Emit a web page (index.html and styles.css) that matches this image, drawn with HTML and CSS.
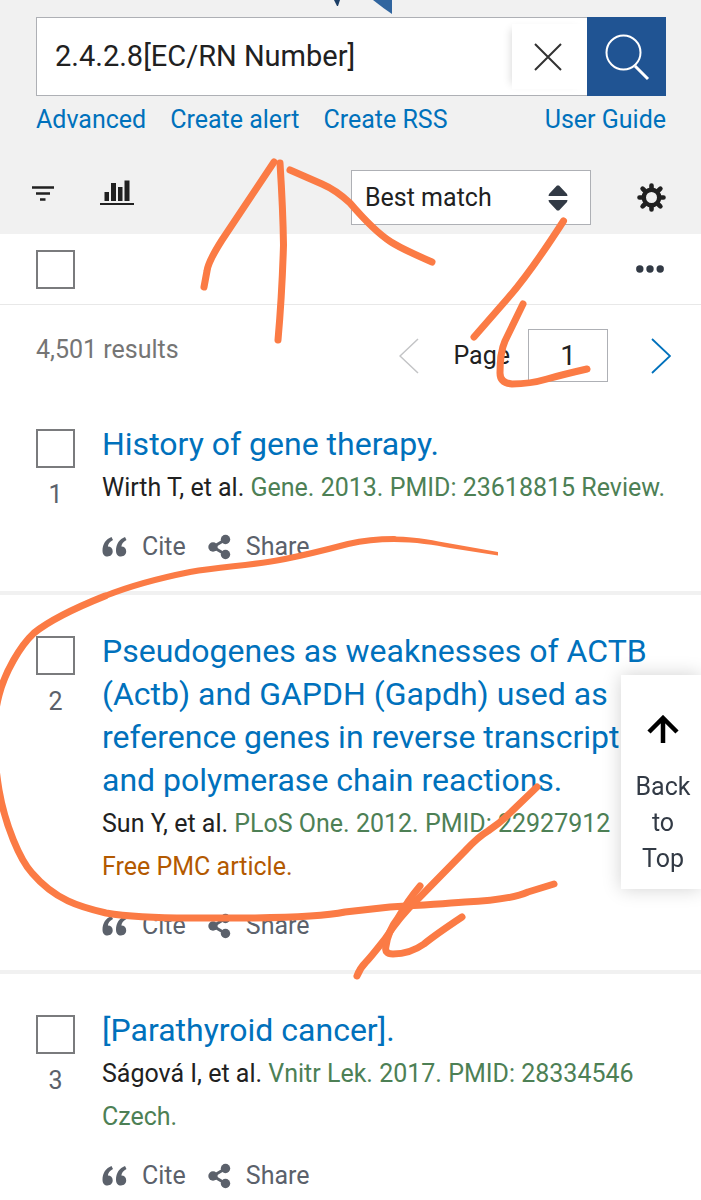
FILE: index.html
```html
<!DOCTYPE html>
<html lang="en">
<head>
    <meta charset="UTF-8">
    <meta name="viewport" content="width=device-width, initial-scale=1.0">
    <title>2.4.2.8[EC/RN Number] - Search Results</title>
    <link rel="stylesheet" href="styles.css">
</head>
<body>
    <!-- shared icons -->
    <svg class="defs" width="0" height="0" aria-hidden="true">
        <symbol id="quote" viewBox="0 0 26 22">
            <path d="M9.500 1C4 3 0.500 8 0.500 14.500C0.500 18.500 2.500 20.500 5.500 20.500C8.500 20.500 10.700 18.500 10.700 15.300C10.700 12.500 8.700 10.600 5.900 10.600C6.100 8 7.500 5.700 11 4Z"/>
            <path d="M23 1C17.500 3 14 8 14 14.500C14 18.500 16 20.500 19 20.500C22 20.500 24.200 18.500 24.200 15.300C24.200 12.500 22.200 10.600 19.400 10.600C19.600 8 21 5.700 24.500 4Z"/>
        </symbol>
        <symbol id="share" viewBox="0 0 24 26">
            <path d="M17.500 5.500L5 13L17.500 20.500" fill="none" stroke="currentColor" stroke-width="3"/>
            <circle cx="17.500" cy="5.500" r="4.700"/>
            <circle cx="5" cy="13" r="4.700"/>
            <circle cx="17.500" cy="20.500" r="4.700"/>
        </symbol>
    </svg>

    <header class="header">
        <svg class="logo" width="84" height="17" viewBox="-24 0 84 17" aria-hidden="true">
            <path d="M1 0H7L5 6H4Z" fill="#1c3e66"/>
            <path d="M40 0H59V14Q50 8 40 0Z" fill="#30659f"/>
        </svg>

        <form class="search">
            <input class="search-input" type="text" aria-label="Search term" value="2.4.2.8[EC/RN Number]">
            <button class="clear-btn" type="button" aria-label="Clear search">
                <svg width="28" height="28" viewBox="0 0 28 28"><path d="M1 1L27 27M27 1L1 27" stroke="#323232" stroke-width="2"/></svg>
            </button>
            <button class="search-btn" type="submit" aria-label="Search">
                <svg width="46" height="48" viewBox="0 0 46 48" fill="none" stroke="#fff">
                    <circle cx="19.500" cy="19.500" r="17" stroke-width="2"/>
                    <path d="M31 33L44 46" stroke-width="3"/>
                </svg>
            </button>
        </form>

        <nav class="links">
            <a href="#">Advanced</a>
            <a href="#">Create alert</a>
            <a href="#">Create RSS</a>
            <a href="#" class="guide">User Guide</a>
        </nav>

        <div class="toolbar">
            <button class="tool-btn" type="button" aria-label="Filters">
                <svg width="24" height="16" viewBox="0 0 24 16"><path d="M1 2.500H23M5 8.500H19M9 14.500H14.500" stroke="#212121" stroke-width="2.600"/></svg>
            </button>
            <button class="tool-btn" type="button" aria-label="Results by year">
                <svg width="34" height="26" viewBox="0 0 34 26" fill="#212121">
                    <path d="M4.500 12H9V21H4.500ZM11 3H16V21H11ZM18 7H22.500V21H18ZM24.500 0.500H29.500V21H24.500ZM0 23H34V25H0Z"/>
                </svg>
            </button>
            <div class="sort">
                <select class="sort-select" aria-label="Sort by">
                    <option>Best match</option>
                    <option>Most recent</option>
                </select>
                <svg class="sort-icon" width="20" height="26" viewBox="0 0 20 26" fill="#323a45" aria-hidden="true">
                    <path d="M0.500 11L1 9L9 0.500H11L19 9L19.500 11ZM0.500 15L1 17L9 25.500H11L19 17L19.500 15Z"/>
                </svg>
            </div>
            <button class="settings-btn" type="button" aria-label="Display options">
                <svg width="29" height="29" viewBox="-14.500 -14.500 29 29" fill="none" stroke="#212121">
                    <circle r="7.700" stroke-width="4.400"/>
                    <path d="M0 -9V-12M0 9V12M-9 0H-12M9 0H12M6.500 -6.500L8.900 -8.900M-6.500 -6.500L-8.900 -8.900M6.500 6.500L8.900 8.900M-6.500 6.500L-8.900 8.900" stroke-width="4.600" stroke-linecap="round"/>
                </svg>
            </button>
        </div>
    </header>

    <main>
        <div class="bulk">
            <input class="check" type="checkbox" aria-label="Select all results">
            <button class="more-btn" type="button" aria-label="More actions">
                <svg width="28" height="8" viewBox="0 0 28 8" fill="#323a45"><circle cx="3.800" cy="4" r="3.700"/><circle cx="14" cy="4" r="3.700"/><circle cx="24.200" cy="4" r="3.700"/></svg>
            </button>
        </div>

        <div class="results-bar">
            <p class="count">4,501 results</p>
            <div class="pager">
                <button class="prev" type="button" aria-label="Previous page" disabled>
                    <svg width="20" height="36" viewBox="0 0 20 36"><path d="M19 1L1 18L19 35" fill="none" stroke="#c3c4c6" stroke-width="1.500"/></svg>
                </button>
                <label for="page">Page</label>
                <input class="page-input" id="page" type="text" value="1">
                <button class="next" type="button" aria-label="Next page">
                    <svg width="20" height="36" viewBox="0 0 20 36"><path d="M1 1L19 18L1 35" fill="none" stroke="#0071bc" stroke-width="1.800"/></svg>
                </button>
            </div>
        </div>

        <article class="result">
            <div class="side">
                <input class="check" id="r1" type="checkbox">
                <label for="r1">1</label>
            </div>
            <div class="body">
                <h2 class="title"><a href="#">History of gene therapy.</a></h2>
                <p class="meta">Wirth T, et al. <span class="journal">Gene. 2013. PMID: 23618815 Review.</span></p>
                <div class="actions">
                    <button type="button"><svg width="26" height="22"><use href="#quote"/></svg>Cite</button>
                    <button type="button"><svg width="24" height="26"><use href="#share"/></svg>Share</button>
                </div>
            </div>
        </article>

        <article class="result">
            <div class="side">
                <input class="check" id="r2" type="checkbox">
                <label for="r2">2</label>
            </div>
            <div class="body">
                <h2 class="title"><a href="#">Pseudogenes as weaknesses of ACTB (Actb) and GAPDH (Gapdh) used as reference genes in reverse transcription and polymerase chain reactions.</a></h2>
                <p class="meta">Sun Y, et al. <span class="journal">PLoS One. 2012. PMID: 22927912</span></p>
                <p class="free">Free PMC article.</p>
                <div class="actions">
                    <button type="button"><svg width="26" height="22"><use href="#quote"/></svg>Cite</button>
                    <button type="button"><svg width="24" height="26"><use href="#share"/></svg>Share</button>
                </div>
            </div>
        </article>

        <article class="result">
            <div class="side">
                <input class="check" id="r3" type="checkbox">
                <label for="r3">3</label>
            </div>
            <div class="body">
                <h2 class="title"><a href="#">[Parathyroid cancer].</a></h2>
                <p class="meta">Ságová I, et al. <span class="journal">Vnitr Lek. 2017. PMID: 28334546 Czech.</span></p>
                <div class="actions">
                    <button type="button"><svg width="26" height="22"><use href="#quote"/></svg>Cite</button>
                    <button type="button"><svg width="24" height="26"><use href="#share"/></svg>Share</button>
                </div>
            </div>
        </article>
    </main>

    <a href="#" class="to-top">
        <svg width="32" height="28" viewBox="0 0 32 28" fill="none" stroke="#000" stroke-width="4.500" aria-hidden="true"><path d="M16 28V4M2 17L16 3L30 17"/></svg>
        <span>Back to Top</span>
    </a>

    <!-- hand-drawn marks over the page -->
    <svg class="marks" width="701" height="1200" viewBox="0 0 701 1200" aria-hidden="true">
        <path d="M274 162L222 240Q208 262 207 271L204 287"/>
        <path d="M280 163Q283 210 283.500 245Q282 295 278 340"/>
        <path d="M290 170L322 184Q336 190 350 203Q374 231 391 242Q402 249 432 262"/>
        <path d="M563.500 221Q530 273 508 298L474 337"/>
        <path d="M523 304L505 341Q500 352 500 373Q500 383 512 384Q530 384 547 379Q565 374 587 369"/>
        <path class="tail" d="M394 536.500C420 537 435 541 450 543.500L498 552V555.500L450 548C435 545 415 542 394 542Z"/>
        <path class="medium" d="M394 539Q370 539 348 544Q310 554 285 559C250 566 225 566 190 572C165 577 130 586 105 596"/>
        <path d="M105 596C75 608 50 620 34 633C20 646 5 672 -1 695C-9 725 -6 760 -1 790C5 825 20 860 32 873C55 900 80 907 106 913C130 917 160 918 190 918L255 918Q320 917 345 912L390 907Q440 904 465 902Q510 900 528 892L554 884"/>
        <path d="M537 787L510 813Q500 823 488 831Q478 837 465 851L418 899Q400 916 385 939Q370 958 366 962Q360 968 357 976"/>
        <path d="M420 886Q408 900 398 918Q388 931 386 946Q384 954 393 954Q410 954 424 944Q435 935 462 917"/>
    </svg>
</body>
</html>
```
FILE: styles.css
```css
*{
    margin: 0;
    padding: 0;
    box-sizing: border-box;
}
body{
    position: relative;
    background-color: #fff;
    color: #212121;
    font-family: Roboto, sans-serif;
    font-size: 25px;
    line-height: 43px;
}
a{
    color: #0071bc;
    text-decoration: none;
}
button{
    background: none;
    border: none;
    font: inherit;
    color: inherit;
    cursor: pointer;
}
svg{
    display: block;
    flex-shrink: 0;
}
.defs{
    position: absolute;
}

/* header */
.header{
    background-color: #f1f1f1;
    padding: 0 35px 9px 36px;
}
.logo{
    margin: 0 auto;
}
.search{
    display: flex;
    height: 79px;
    background-color: #fff;
    border: 1px solid #aeb0b5;
}
.search-input{
    flex: 1;
    min-width: 0;
    padding-left: 18px;
    border: none;
    background: none;
    color: #212121;
    font: inherit;
    font-size: 29px;
}
.clear-btn{
    display: flex;
    align-items: center;
    justify-content: center;
    width: 76px;
    margin: 6px 0;
    padding-right: 4px;
    box-shadow: -6px 0 8px -5px rgba(0,0,0,0.15);
}
.search-btn{
    display: flex;
    align-items: center;
    justify-content: center;
    width: 79px;
    margin: -1px;
    background-color: #205493;
}
.links{
    display: flex;
    gap: 24px;
    line-height: 48px;
}
.guide{
    margin-left: auto;
}
.toolbar{
    display: flex;
    align-items: flex-start;
    margin-top: 26px;
}
.tool-btn{
    display: flex;
    align-items: center;
    height: 46px;
    margin-left: -5px;
    margin-right: 50px;
}
.sort{
    display: grid;
    align-items: center;
    width: 240px;
    height: 55px;
    margin-left: auto;
}
.sort-select{
    grid-area: 1 / 1;
    height: 100%;
    padding-left: 13px;
    border: 1px solid #aeb0b5;
    border-radius: 0;
    background-color: #fff;
    color: #212121;
    font: inherit;
    appearance: none;
}
.sort-icon{
    grid-area: 1 / 1;
    justify-self: end;
    margin-right: 23px;
    pointer-events: none;
}
.settings-btn{
    display: flex;
    align-items: center;
    height: 55px;
    margin-left: 46px;
}

/* bulk actions and paging */
.check{
    display: block;
    width: 39px;
    height: 39px;
    border: 2px solid #7a7b7d;
    background-color: #fff;
    appearance: none;
}
.bulk{
    display: flex;
    align-items: center;
    justify-content: space-between;
    height: 71px;
    padding: 0 37px 0 36px;
    border-bottom: 1px solid #e8e8e8;
}
.results-bar{
    display: flex;
    justify-content: space-between;
    padding: 24px 30px 6px 36px;
}
.count{
    color: #757575;
    line-height: 41px;
}
.pager{
    display: flex;
    align-items: center;
    height: 53px;
}
.prev{
    margin-right: 34px;
}
.page-input{
    width: 80px;
    height: 53px;
    margin: 0 43px 0 18px;
    border: 1px solid #aeb0b5;
    color: #212121;
    font: inherit;
    font-size: 28px;
    text-align: center;
}

/* results */
.result{
    display: flex;
    gap: 27px;
    padding: 35px 30px 24px 36px;
    border-bottom: 4px solid #f1f1f1;
}
.result:last-child{
    padding-bottom: 0;
    border-bottom: none;
}
.side{
    display: flex;
    flex-direction: column;
    align-items: center;
    gap: 5px;
    padding-top: 6px;
    color: #5b616b;
}
.body{
    flex: 1;
}
.title{
    font-size: 32px;
    font-weight: 400;
}
.journal{
    color: #4d8055;
}
.free{
    color: #b35900;
}
.actions{
    display: flex;
    gap: 22px;
    margin-top: 18px;
    color: #5b616b;
}
.actions button{
    display: flex;
    align-items: center;
    gap: 14px;
    line-height: 40px;
}
.actions svg{
    fill: currentColor;
}

.to-top{
    position: fixed;
    top: 675px;
    right: 0;
    display: flex;
    flex-direction: column;
    align-items: center;
    gap: 26px;
    width: 80px;
    padding: 40px 8px 12px 12px;
    background-color: #fff;
    box-shadow: 0 0 18px rgba(0,0,0,0.18);
    color: #323a45;
    line-height: 36px;
    text-align: center;
}

/* marks */
.marks{
    position: absolute;
    top: 0;
    left: 0;
    fill: none;
    stroke: #fb7b45;
    stroke-width: 7;
    stroke-linecap: round;
    stroke-linejoin: round;
    pointer-events: none;
}
.medium{
    stroke-width: 6;
}
.tail{
    fill: #fb7b45;
    stroke: none;
}
```
